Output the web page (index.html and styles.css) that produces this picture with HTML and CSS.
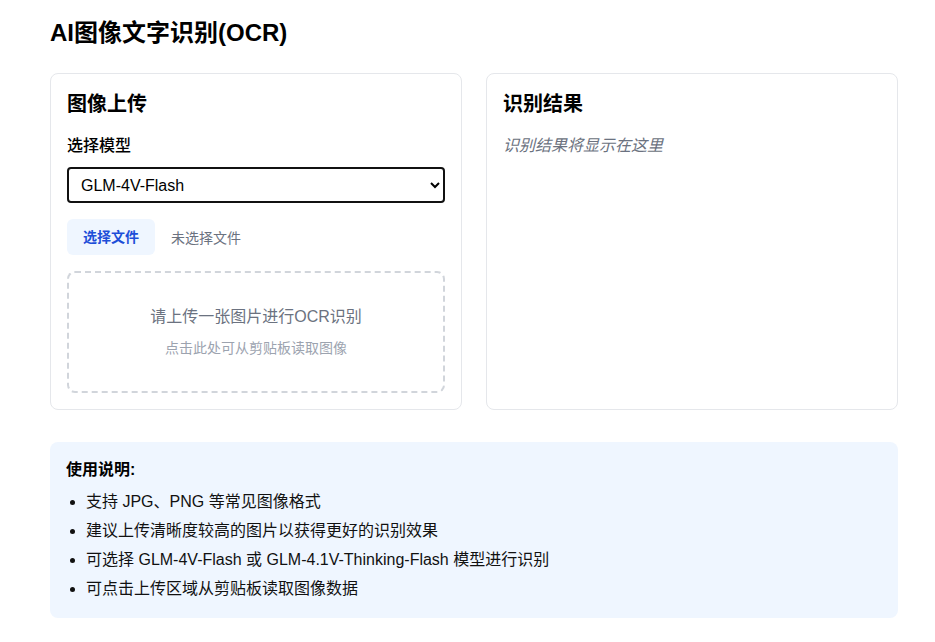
FILE: index.html
```html
<!DOCTYPE html>
<html lang="zh-CN">
<head>
<meta charset="utf-8">
<title>AI图像文字识别(OCR)</title>
<link rel="stylesheet" href="styles.css">
</head>
<body>
<div class="container">
  <h1 class="title">AI图像文字识别(OCR)</h1>
  <div class="grid">
    <section class="card">
      <h2 class="card-title">图像上传</h2>
      <label class="label" for="model">选择模型</label>
      <select id="model" class="select">
        <option>GLM-4V-Flash</option>
        <option>GLM-4.1V-Thinking-Flash</option>
      </select>
      <div class="file-row">
        <span class="file-btn">选择文件</span>
        <span class="file-name">未选择文件</span>
      </div>
      <div class="dropzone">
        <p class="drop-main">请上传一张图片进行OCR识别</p>
        <p class="drop-sub">点击此处可从剪贴板读取图像</p>
      </div>
    </section>
    <section class="card">
      <h2 class="card-title">识别结果</h2>
      <p class="placeholder">识别结果将显示在这里</p>
    </section>
  </div>
  <div class="help">
    <h3 class="help-title">使用说明:</h3>
    <ul class="help-list">
      <li>支持 JPG、PNG 等常见图像格式</li>
      <li>建议上传清晰度较高的图片以获得更好的识别效果</li>
      <li>可选择 GLM-4V-Flash 或 GLM-4.1V-Thinking-Flash 模型进行识别</li>
      <li>可点击上传区域从剪贴板读取图像数据</li>
    </ul>
  </div>
</div>
</body>
</html>
```
FILE: styles.css
```css
* { box-sizing: border-box; }
html, body { margin: 0; padding: 0; background: #fff; }
body {
  font-family: "Liberation Sans", Arial, "Noto Sans CJK SC", sans-serif;
  color: #111827;
}
.container {
  width: 848px;
  margin-left: 50px;
  padding-top: 17px;
}
.title {
  margin: 0 0 24px;
  font-size: 24px;
  line-height: 32px;
  font-weight: 700;
  color: #000;
}
.grid {
  display: grid;
  grid-template-columns: 1fr 1fr;
  gap: 24px;
}
.card {
  border: 1px solid #e5e7eb;
  border-radius: 8px;
  padding: 16px;
  background: #fff;
}
.card-title {
  margin: 0 0 16px;
  font-size: 20px;
  line-height: 28px;
  font-weight: 700;
  color: #000;
}
.label {
  display: block;
  font-size: 16px;
  line-height: 24px;
  font-weight: 500;
  margin-bottom: 9px;
  color: #000;
}
.select {
  display: block;
  width: 100%;
  height: 36px;
  border: 2px solid #111;
  border-radius: 4px;
  padding: 0 8px;
  font-family: inherit;
  font-size: 16px;
  color: #000;
  background: #fff;
  outline: none;
}
.file-row {
  display: flex;
  align-items: center;
  margin-top: 16px;
  font-size: 14px;
}
.file-btn {
  background: #eff6ff;
  color: #1d4ed8;
  font-weight: 700;
  padding: 8px 16px;
  border-radius: 6px;
  line-height: 20px;
  margin-right: 16px;
}
.file-name { color: #6b7280; }
.dropzone {
  margin-top: 16px;
  border: 2px dashed #d1d5db;
  border-radius: 8px;
  padding: 32px 16px 33px;
  text-align: center;
}
.drop-main {
  margin: 0;
  font-size: 16px;
  line-height: 24px;
  color: #6b7280;
}
.drop-sub {
  margin: 9px 0 0;
  font-size: 14px;
  line-height: 20px;
  color: #9ca3af;
}
.placeholder {
  margin: 0;
  font-size: 16px;
  line-height: 24px;
  font-style: italic;
  color: #6b7280;
}
.help {
  margin-top: 32px;
  background: #eff6ff;
  border-radius: 8px;
  padding: 16px 16px 17px;
}
.help-title {
  margin: 0 0 8px;
  font-size: 16px;
  line-height: 24px;
  font-weight: 700;
  color: #000;
}
.help-list {
  margin: 0;
  padding-left: 20px;
  list-style: disc;
}
.help-list li {
  font-size: 16px;
  line-height: 24px;
  color: #111;
  margin-top: 5px;
}
.help-list li:first-child { margin-top: 0; }
```
